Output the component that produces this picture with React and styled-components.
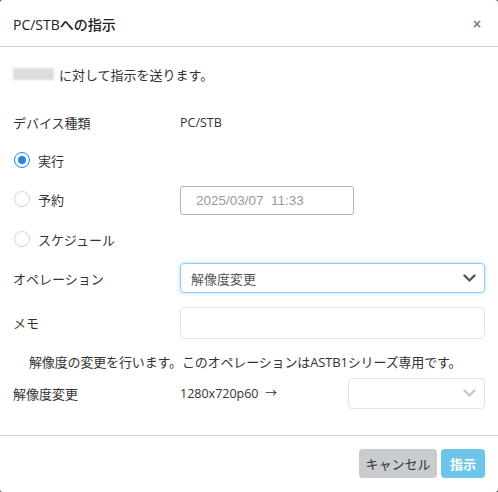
import React from 'react';
import styled, { createGlobalStyle } from 'styled-components';

const GlobalStyle = createGlobalStyle`
  html, body {
    margin: 0;
    padding: 0;
    background: #5a5a5a;
  }
  body {
    font-family: "Open Sans", "Noto Sans", "Noto Sans CJK JP", sans-serif;
    color: #333;
  }
`;

export default function App() {
  return (
    <>
      <GlobalStyle />
      <Modal>
        <Header>
          <Title>PC/STBへの指示</Title>
          <Close>×</Close>
        </Header>
        <Body>
          <Row height={54}>
            <Intro><Masked /> に対して指示を送ります。</Intro>
          </Row>
          <Row height={42}>
            <Label>デバイス種類</Label>
            <Value>PC/STB</Value>
          </Row>
          <Row height={34}>
            <Radio checked>実行</Radio>
          </Row>
          <Row height={44}>
            <Label><Radio>予約</Radio></Label>
            <DateInput>2025/03/07&nbsp; 11:33</DateInput>
          </Row>
          <Row height={36}>
            <Radio>スケジュール</Radio>
          </Row>
          <Row height={42}>
            <Label>オペレーション</Label>
            <Select focused>
              <span>解像度変更</span>
              <Chevron color="#555" />
            </Select>
          </Row>
          <Row height={47}>
            <Label>メモ</Label>
            <TextBox />
          </Row>
          <Row height={30}>
            <Note>解像度の変更を行います。このオペレーションはASTB1シリーズ専用です。</Note>
          </Row>
          <Row height={34}>
            <Label>解像度変更</Label>
            <Value grow>1280x720p60&nbsp; <Arrow>→</Arrow></Value>
            <SmallSelect>
              <Chevron color="#c8c8c8" />
            </SmallSelect>
          </Row>
        </Body>
        <Footer>
          <Button variant="cancel" width={78}>キャンセル</Button>
          <Button variant="primary" width={44}>指示</Button>
        </Footer>
      </Modal>
    </>
  );
}

function Radio({ checked, children }) {
  return (
    <RadioWrap>
      <RadioDot checked={checked} />
      <span>{children}</span>
    </RadioWrap>
  );
}

function Chevron({ color }) {
  return (
    <svg width="13" height="9" viewBox="0 0 13 9">
      <path d="M1.5 1.5 L6.5 6.5 L11.5 1.5" fill="none" stroke={color} strokeWidth="2.4" strokeLinecap="round" strokeLinejoin="round" />
    </svg>
  );
}

const Modal = styled.div`
  width: 498px;
  height: 492px;
  background: #fff;
  border-radius: 3px;
  display: flex;
  flex-direction: column;
  overflow: hidden;
`;

const Header = styled.div`
  height: 47px;
  box-sizing: border-box;
  padding: 0 13px 0 13px;
  display: flex;
  align-items: center;
  justify-content: space-between;
  border-bottom: 1px solid #cfcfcf;
`;

const Title = styled.div`
  font-size: 14px;
  font-weight: 500;
  color: #222;
  padding-top: 1px;
`;

const Close = styled.div`
  font-size: 12px;
  font-weight: 700;
  color: #777;
  font-family: "DejaVu Sans", sans-serif;
  padding: 2px 3px 0 0;
`;

const Body = styled.div`
  padding: 0 13px 25px 13px;
  display: flex;
  flex-direction: column;
  border-bottom: 1px solid #cfcfcf;
`;

const Row = styled.div`
  height: ${props => props.height}px;
  display: flex;
  align-items: center;
  font-size: 13px;
`;

const Intro = styled.div`
  display: flex;
  align-items: center;
  gap: 2px;
  font-size: 13px;
`;

const Masked = styled.span`
  display: inline-block;
  width: 41px;
  height: 12px;
  background: #dcdcdc;
  filter: blur(1px);
  margin-right: 3px;
`;

const Label = styled.div`
  width: 167px;
  flex-shrink: 0;
`;

const Value = styled.div`
  flex: ${props => (props.grow ? 1 : 'none')};
  font-family: "Open Sans", "Noto Sans", sans-serif;
  font-size: 12.5px;
`;

const Arrow = styled.span`
  font-family: "Noto Sans CJK JP", sans-serif;
  font-size: 12px;
`;

const RadioWrap = styled.label`
  display: flex;
  align-items: center;
  gap: 8px;
  margin-left: 1px;
`;

const RadioDot = styled.span`
  width: 16px;
  height: 16px;
  box-sizing: border-box;
  border-radius: 50%;
  border: 1px solid ${props => (props.checked ? '#1e88f0' : '#d4d4d4')};
  display: flex;
  align-items: center;
  justify-content: center;
  &::after {
    content: '';
    width: 8px;
    height: 8px;
    border-radius: 50%;
    background: ${props => (props.checked ? '#1e88f0' : 'transparent')};
  }
`;

const DateInput = styled.div`
  width: 174px;
  height: 29px;
  margin-top: 2px;
  box-sizing: border-box;
  border: 1px solid #b4b4b4;
  border-radius: 3px;
  padding: 0 15px;
  display: flex;
  align-items: center;
  font-family: "Liberation Sans", Arial, sans-serif;
  font-size: 13.5px;
  color: #9a9a9a;
`;

const Select = styled.div`
  flex: 1;
  height: 30px;
  box-sizing: border-box;
  border: 1px solid ${props => (props.focused ? '#8ccdf0' : '#e3e3e3')};
  box-shadow: ${props => (props.focused ? '0 0 4px rgba(102, 175, 233, 0.45)' : 'none')};
  border-radius: 4px;
  padding: 0 8px 0 10px;
  display: flex;
  align-items: center;
  justify-content: space-between;
  color: #555;
`;

const SmallSelect = styled(Select)`
  flex: none;
  width: 137px;
  height: 31px;
  justify-content: flex-end;
`;

const TextBox = styled.div`
  flex: 1;
  height: 32px;
  box-sizing: border-box;
  border: 1px solid #e3e3e3;
  border-radius: 4px;
`;

const Note = styled.div`
  padding-left: 16px;
  font-size: 13px;
  letter-spacing: -0.15px;
`;

const Footer = styled.div`
  display: flex;
  justify-content: flex-end;
  gap: 4px;
  padding: 13px 13px 0 0;
`;

const Button = styled.button`
  width: ${props => props.width}px;
  height: 29px;
  border: none;
  border-radius: 4px;
  padding: 0;
  font-family: inherit;
  font-size: 13px;
  background: ${props => (props.variant === 'primary' ? '#6cc6e9' : '#c8ccd1')};
  color: ${props => (props.variant === 'primary' ? '#fff' : '#333')};
  font-weight: ${props => (props.variant === 'primary' ? 600 : 400)};
`;
